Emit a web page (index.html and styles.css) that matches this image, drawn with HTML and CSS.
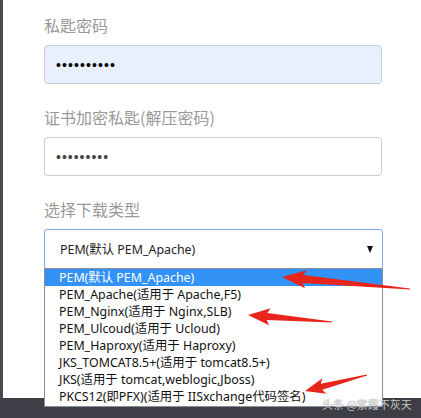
FILE: index.html
```html
<!DOCTYPE html>
<html lang="zh-CN">
<head>
<meta charset="utf-8">
<link rel="stylesheet" href="styles.css">
</head>
<body>
<div class="screen">
  <div class="side"></div>
  <div class="panel">
    <div class="field">
      <label class="label">私匙密码</label>
      <div class="input autofill"><span class="dots">••••••••••</span></div>
    </div>
    <div class="field">
      <label class="label">证书加密私匙(解压密码)</label>
      <div class="input"><span class="dots grey">•••••••••</span></div>
    </div>
    <div class="field">
      <label class="label">选择下载类型</label>
      <div class="select-wrap">
        <div class="select">
          <span>PEM(默认 PEM_Apache)</span>
          <span class="caret"></span>
        </div>
        <ul class="options">
          <li class="opt active">PEM(默认 PEM_Apache)</li>
          <li class="opt">PEM_Apache(适用于 Apache,F5)</li>
          <li class="opt">PEM_Nginx(适用于 Nginx,SLB)</li>
          <li class="opt">PEM_Ulcoud(适用于 Ucloud)</li>
          <li class="opt">PEM_Haproxy(适用于 Haproxy)</li>
          <li class="opt">JKS_TOMCAT8.5+(适用于 tomcat8.5+)</li>
          <li class="opt">JKS(适用于 tomcat,weblogic,Jboss)</li>
          <li class="opt">PKCS12(即PFX)(适用于 IISxchange代码签名)</li>
        </ul>
      </div>
    </div>
  </div>
  <div class="bottom"></div>
  <svg class="arrows" width="421" height="418" viewBox="0 0 421 418">
    <g fill="#e8251b">
      <g transform="translate(282,277) rotate(5.36)">
        <polygon points="0,0 24,-9 21,-4 128.6,-0.6 128.6,0.6 21,4 24,9"/>
      </g>
      <g transform="translate(248,315) rotate(4.76)">
        <polygon points="0,0 22,-8.5 19,-3.5 84.3,-0.6 84.3,0.6 19,3.5 22,8.5"/>
      </g>
      <g transform="translate(305,391) rotate(-14.47)">
        <polygon points="0,0 20,-8 17,-3.2 64,-0.6 64,0.6 17,3.2 20,8"/>
      </g>
    </g>
  </svg>
  <div class="watermark">头条 @紫霞不灰天</div>
</div>
</body>
</html>
```
FILE: styles.css
```css
* { box-sizing: border-box; }
html, body { margin: 0; padding: 0; }
body {
  width: 421px;
  height: 418px;
  overflow: hidden;
  background: #3e3e46;
  font-family: "Noto Sans", "Noto Sans CJK SC", sans-serif;
}
.screen {
  position: relative;
  width: 421px;
  height: 418px;
  display: grid;
  grid-template-columns: 3px 1fr;
  grid-template-rows: 398px 20px;
}
.side {
  background: #4a4a54;
}
.panel {
  background: #fff;
  padding: 14px 0 0 41px;
  display: flex;
  flex-direction: column;
}
.bottom {
  grid-column: 1 / 3;
  background: #3e3e46;
}
.field {
  display: flex;
  flex-direction: column;
  margin-bottom: 22px;
}
.label {
  font-family: "Noto Sans CJK SC", sans-serif;
  font-size: 16px;
  line-height: 22px;
  color: #999;
  margin-bottom: 9px;
}
.input {
  width: 338px;
  height: 39px;
  border: 1px solid #ccc;
  border-radius: 4px;
  background: #fff;
  display: flex;
  align-items: center;
  padding-left: 11px;
}
.input.autofill {
  background: #e8f0fe;
  border-color: #c9ccd4;
}
.dots {
  font-family: "Liberation Sans", sans-serif;
  font-size: 14px;
  letter-spacing: 1.1px;
  color: #000;
  line-height: 1;
}
.dots.grey { color: #444; letter-spacing: 1px; }
.select-wrap {
  position: relative;
  width: 339px;
}
.select {
  height: 40px;
  border: 1px solid #82a6e4;
  border-radius: 3px 3px 0 0;
  display: flex;
  align-items: center;
  justify-content: space-between;
  padding: 0 9px 0 15px;
  font-size: 12.4px;
  color: #222;
}
.caret {
  width: 0;
  height: 0;
  border-left: 3.5px solid transparent;
  border-right: 3.5px solid transparent;
  border-top: 7px solid #111;
}
.options {
  position: absolute;
  left: 0;
  top: 39px;
  width: 339px;
  margin: 0;
  padding: 0 0 1px;
  list-style: none;
  background: #fff;
  border: 1px solid #8a8e98;
  z-index: 2;
}
.opt {
  height: 17px;
  line-height: 17px;
  padding-left: 14px;
  font-size: 12.4px;
  color: #111;
  white-space: nowrap;
}
.opt.active {
  background: #3292f6;
  color: #fff;
}
.arrows {
  position: absolute;
  left: 0;
  top: 0;
  z-index: 3;
  pointer-events: none;
}
.watermark {
  position: absolute;
  left: 322px;
  top: 397px;
  z-index: 4;
  font-family: "Noto Sans CJK SC", sans-serif;
  font-size: 11px;
  line-height: 15px;
  color: rgba(235, 235, 240, 0.85);
  text-shadow: 0 0 1px rgba(0, 0, 0, 0.5);
}
```
